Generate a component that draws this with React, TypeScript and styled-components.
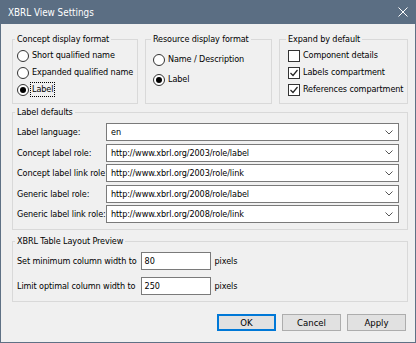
import React, { useState } from 'react'
import styled, { createGlobalStyle } from 'styled-components'

const GlobalStyle = createGlobalStyle`
  html, body {
    margin: 0;
    padding: 0;
    background: #f0f0f0;
  }
  * {
    box-sizing: border-box;
  }
`

const Window = styled.div`
  width: 416px;
  height: 343px;
  display: flex;
  flex-direction: column;
  border: 1px solid #5f7185;
  border-top: none;
  background: #f0f0f0;
  font-family: 'DejaVu Sans Condensed', 'Liberation Sans', sans-serif;
  font-size: 9px;
  letter-spacing: -0.1px;
  color: #000;
  white-space: nowrap;
`

const TitleBar = styled.div`
  height: 24px;
  margin: 0 -1px;
  flex: none;
  display: flex;
  align-items: center;
  justify-content: space-between;
  padding: 0 8px 0 8px;
  background: #5b6e83;
  color: #fff;
  font-size: 9.8px;
  letter-spacing: 0;
`

const Body = styled.div`
  flex: 1;
  display: flex;
  flex-direction: column;
  padding: 9px 7px 0 11px;
`

const TopRow = styled.div`
  display: grid;
  grid-template-columns: 126px 127px 129px;
  justify-content: space-between;
`

const Group = styled.fieldset<{ pl?: number; pt?: number; gap?: number; h?: number }>`
  margin: 0;
  min-width: 0;
  border: 1px solid #d9d9d9;
  padding: ${({ pt }) => pt ?? 1}px 8px 0 ${({ pl }) => pl ?? 4}px;
  display: flex;
  flex-direction: column;
  gap: ${({ gap }) => gap ?? 0}px;
  height: ${({ h }) => (h ? `${h}px` : 'auto')};
`

const Legend = styled.legend`
  padding: 0 2px;
  margin-left: -2px;
  line-height: 13px;
`

const OptionRow = styled.label`
  height: 17px;
  display: flex;
  align-items: center;
  gap: 2px;
`

const Radio = styled.span<{ checked?: boolean }>`
  width: 12px;
  height: 12px;
  flex: none;
  border-radius: 50%;
  border: 1px solid #333;
  background: #fff;
  display: flex;
  align-items: center;
  justify-content: center;
  &::after {
    content: '';
    width: 6px;
    height: 6px;
    border-radius: 50%;
    background: ${({ checked }) => (checked ? '#000' : 'transparent')};
  }
`

const CheckBox = styled.span`
  width: 12px;
  height: 12px;
  flex: none;
  border: 1px solid #333;
  background: #fff;
  display: flex;
  align-items: center;
  justify-content: center;
`

const FocusText = styled.span<{ focused?: boolean }>`
  padding: 0 1px;
  line-height: 13px;
  outline: ${({ focused }) => (focused ? '1px dotted #000' : 'none')};
`

const WideGroup = styled.fieldset<{ mt: number; pb: number; gap: number }>`
  margin: ${({ mt }) => mt}px 0 0 0;
  border: 1px solid #d9d9d9;
  padding: 4px 8px ${({ pb }) => pb}px 4px;
  display: flex;
  flex-direction: column;
  gap: ${({ gap }) => gap}px;
`

const FieldRow = styled.div`
  display: grid;
  grid-template-columns: 89px 1fr;
  align-items: center;
`

const Select = styled.div`
  height: 18px;
  display: flex;
  align-items: center;
  justify-content: space-between;
  padding: 0 5px 0 4px;
  border: 1px solid #7a7a7a;
  background: #fff;
`

const WidthRows = styled.div`
  display: grid;
  grid-template-columns: max-content 70px auto;
  column-gap: 4px;
  row-gap: 7px;
  align-items: center;
`

const NumberBox = styled.div`
  height: 18px;
  padding: 0 3px;
  display: flex;
  align-items: center;
  border: 1px solid #7a7a7a;
  background: #fff;
`

const ButtonRow = styled.div`
  display: flex;
  justify-content: flex-end;
  gap: 6px;
  margin: 12px 2px 0 0;
`

const Button = styled.button<{ primary?: boolean }>`
  width: 59px;
  height: 17px;
  padding: 0;
  font: inherit;
  font-size: 9.5px;
  color: #000;
  background: #e1e1e1;
  border: 1px solid ${({ primary }) => (primary ? '#0078d7' : '#adadad')};
  box-shadow: ${({ primary }) => (primary ? 'inset 0 0 0 1px #0078d7' : 'none')};
`

const Chevron = () => (
  <svg width="8" height="5" viewBox="0 0 8 5">
    <polyline points="0.5,0.5 4,4 7.5,0.5" fill="none" stroke="#555" strokeWidth="1" />
  </svg>
)

const Tick = () => (
  <svg width="10" height="10" viewBox="0 0 10 10">
    <polyline points="1.5,5 4,7.5 8.5,2" fill="none" stroke="#222" strokeWidth="1.2" />
  </svg>
)

const CloseIcon = () => (
  <svg width="10" height="10" viewBox="0 0 10 10">
    <path d="M0.5 0.5 L9.5 9.5 M9.5 0.5 L0.5 9.5" stroke="#fff" strokeWidth="1" />
  </svg>
)

const labelRows = [
  ['Label language:', 'en'],
  ['Concept label role:', 'http://www.xbrl.org/2003/role/label'],
  ['Concept label link role:', 'http://www.xbrl.org/2003/role/link'],
  ['Generic label role:', 'http://www.xbrl.org/2008/role/label'],
  ['Generic label link role:', 'http://www.xbrl.org/2008/role/link'],
]

const widthRows = [
  ['Set minimum column width to', '80'],
  ['Limit optimal column width to', '250'],
]

export default function App() {
  const [concept, setConcept] = useState('label')
  const [resource, setResource] = useState('label')

  return (
    <>
      <GlobalStyle />
      <Window>
        <TitleBar>
          <span>XBRL View Settings</span>
          <CloseIcon />
        </TitleBar>
        <Body>
          <TopRow>
            <Group h={71}>
              <Legend>Concept display format</Legend>
              <OptionRow onClick={() => setConcept('short')}>
                <Radio checked={concept === 'short'} />
                <FocusText>Short qualified name</FocusText>
              </OptionRow>
              <OptionRow onClick={() => setConcept('expanded')}>
                <Radio checked={concept === 'expanded'} />
                <FocusText>Expanded qualified name</FocusText>
              </OptionRow>
              <OptionRow onClick={() => setConcept('label')}>
                <Radio checked={concept === 'label'} />
                <FocusText focused>Label</FocusText>
              </OptionRow>
            </Group>
            <Group h={71} pl={7} pt={5} gap={3}>
              <Legend>Resource display format</Legend>
              <OptionRow onClick={() => setResource('name')}>
                <Radio checked={resource === 'name'} />
                <FocusText>Name / Description</FocusText>
              </OptionRow>
              <OptionRow onClick={() => setResource('label')}>
                <Radio checked={resource === 'label'} />
                <FocusText>Label</FocusText>
              </OptionRow>
            </Group>
            <Group h={71} pl={8}>
              <Legend>Expand by default</Legend>
              <OptionRow>
                <CheckBox />
                <FocusText>Component details</FocusText>
              </OptionRow>
              <OptionRow>
                <CheckBox>
                  <Tick />
                </CheckBox>
                <FocusText>Labels compartment</FocusText>
              </OptionRow>
              <OptionRow>
                <CheckBox>
                  <Tick />
                </CheckBox>
                <FocusText>References compartment</FocusText>
              </OptionRow>
            </Group>
          </TopRow>

          <WideGroup mt={2} pb={6} gap={2.5}>
            <Legend>Label defaults</Legend>
            {labelRows.map(([label, value]) => (
              <FieldRow key={label}>
                <span>{label}</span>
                <Select>
                  <span>{value}</span>
                  <Chevron />
                </Select>
              </FieldRow>
            ))}
          </WideGroup>

          <WideGroup mt={5} pb={6} gap={0}>
            <Legend>XBRL Table Layout Preview</Legend>
            <WidthRows>
              {widthRows.map(([label, value]) => (
                <React.Fragment key={label}>
                  <span>{label}</span>
                  <NumberBox>{value}</NumberBox>
                  <span>pixels</span>
                </React.Fragment>
              ))}
            </WidthRows>
          </WideGroup>

          <ButtonRow>
            <Button primary>OK</Button>
            <Button>Cancel</Button>
            <Button>Apply</Button>
          </ButtonRow>
        </Body>
      </Window>
    </>
  )
}
